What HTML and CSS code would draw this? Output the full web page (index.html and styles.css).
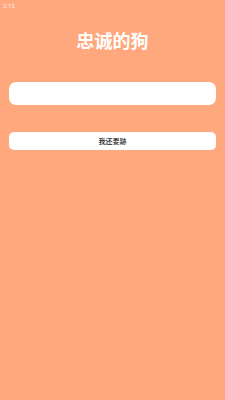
FILE: index.html
```html
<!DOCTYPE html>
<html>
<head>
<meta charset="utf-8">
<link rel="stylesheet" href="styles.css">
</head>
<body>
<div class="page">
  <div class="status">2:15</div>
  <h1 class="title">忠诚的狗</h1>
  <div class="input"></div>
  <div class="button">我还要跡</div>
</div>
</body>
</html>
```
FILE: styles.css
```css
html, body {
  margin: 0;
  padding: 0;
  background: #ffa87d;
}
body {
  font-family: "Noto Sans CJK SC", "Noto Sans", sans-serif;
}
.page {
  width: 225px;
  height: 400px;
  display: flex;
  flex-direction: column;
}
.status {
  height: 8px;
  padding: 2px 0 0 3px;
  font-family: "Roboto", sans-serif;
  font-size: 6px;
  line-height: 7px;
  color: rgba(255, 255, 255, 0.85);
}
.title {
  margin: 20px 0 0;
  text-align: center;
  color: #ffffff;
  font-size: 18px;
  line-height: 20px;
  font-weight: bold;
}
.input {
  margin: 32px 9px 0;
  height: 23px;
  background: #ffffff;
  border-radius: 7px;
}
.button {
  margin: 27px 9px 0;
  height: 18px;
  background: #ffffff;
  border-radius: 5px;
  display: flex;
  align-items: center;
  justify-content: center;
  font-size: 7px;
  font-weight: 500;
  color: #222222;
}
```
